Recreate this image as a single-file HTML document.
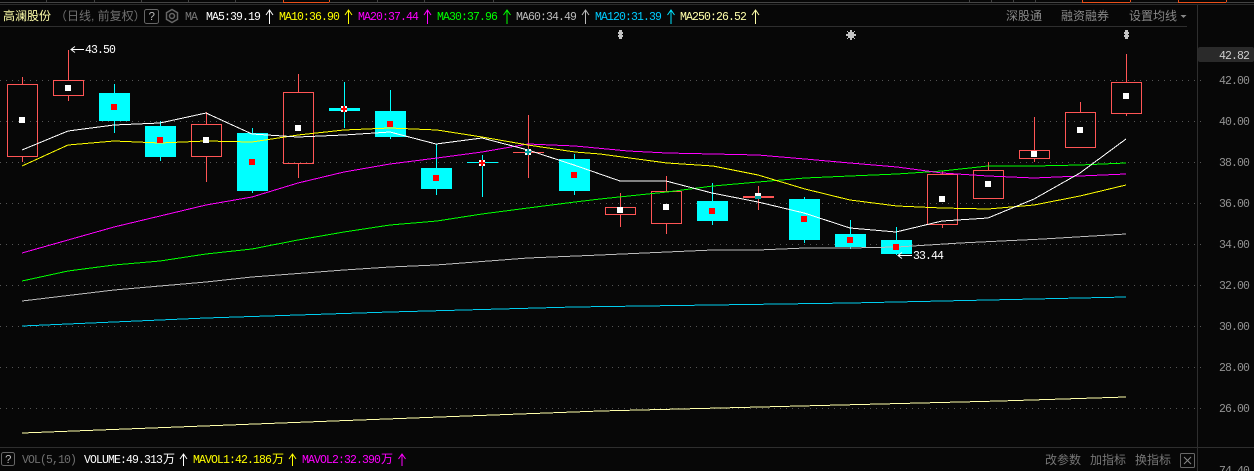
<!DOCTYPE html>
<html><head><meta charset="utf-8"><style>
html,body{margin:0;padding:0;background:#070707;width:1254px;height:471px;overflow:hidden}
svg{display:block}
text{font-family:"Liberation Mono","Noto Sans CJK SC",monospace;font-size:11.500px;letter-spacing:-0.900px}
.c{font-family:"Liberation Sans","Noto Sans CJK SC",sans-serif;font-size:12px;letter-spacing:0}
.g{stroke:#555;stroke-width:1;stroke-dasharray:1 5}
.ln{fill:none;stroke-width:1;shape-rendering:crispEdges}
.w{stroke:#ff5555;stroke-width:1;shape-rendering:crispEdges}
.u{fill:none;stroke:#ff5555;shape-rendering:crispEdges}
.d{fill:#00ffff;shape-rendering:crispEdges}
.dw{stroke:#00ffff;stroke-width:1;shape-rendering:crispEdges}
.a{fill:none;stroke-width:1}
</style></head><body>
<svg width="1254" height="471" viewBox="0 0 1254 471" xmlns="http://www.w3.org/2000/svg">
<rect width="1254" height="471" fill="#070707"/>
<!-- top strip -->
<g shape-rendering="crispEdges">
<rect x="0" y="2" width="1254" height="1" fill="#444"/>
<path d="M46.5 0V2M94.5 0V2M141.5 0V2M188.5 0V2M235.5 0V2M377.5 0V2M424.5 0V2M493.5 0V2M969.5 0V2M991.5 0V2M1013.5 0V2M1035.5 0V2" stroke="#444"/>
<rect x="283" y="2" width="46" height="1" fill="#e8501a"/><path d="M283.5 0V2M329.5 0V2" stroke="#e8501a"/>
<rect x="1082" y="2" width="48" height="1" fill="#e8501a"/><path d="M1082.5 0V2M1130.5 0V2" stroke="#e8501a"/>
<rect x="1178" y="2" width="48" height="1" fill="#e8501a"/><path d="M1178.5 0V2M1226.5 0V2" stroke="#e8501a"/>
<rect x="0" y="4" width="1254" height="1" fill="#2a2a2a"/>
<rect x="0" y="26" width="1187" height="1" fill="#2e2e2e"/>
<rect x="0" y="447" width="1254" height="1" fill="#2e2e2e"/>
<rect x="1197" y="5" width="1" height="466" fill="#2e2e2e"/>
</g>
<!-- grid -->
<g>
<path class="g" d="M0 80.5H1201M0 121.5H1201M0 162.5H1201M0 203.5H1201M0 244.5H1201M0 285.5H1201M0 326.5H1201M0 367.5H1201M0 408.5H1201"/>
</g>
<!-- header -->
<text class="c" x="3" y="20" fill="#ffffaa">高澜股份</text>
<text class="c" x="55" y="20" fill="#707070">（日线, 前复权）</text>
<rect x="144.500" y="9.500" width="14" height="14" rx="2" fill="none" stroke="#666"/>
<text x="148.500" y="20" fill="#bbb">?</text>
<g fill="none" stroke="#666" stroke-width="1.500">
<path d="M172 9.500l5.500 3.200v6.600l-5.500 3.200l-5.500-3.200v-6.600z"/><circle cx="172" cy="16" r="2.500"/>
</g>
<text x="185" y="20" fill="#777">MA</text>
<text x="206" y="20" fill="#fff">MA5:39.19</text>
<text x="279" y="20" fill="#ffff00">MA10:36.90</text>
<text x="358" y="20" fill="#ff00ff">MA20:37.44</text>
<text x="437" y="20" fill="#00ff00">MA30:37.96</text>
<text x="516" y="20" fill="#bbbbbb">MA60:34.49</text>
<text x="595" y="20" fill="#00ccff">MA120:31.39</text>
<text x="680" y="20" fill="#ffffaa">MA250:26.52</text>
<g class="a">
<path stroke="#fff" fill="none" d="M269.500 24V10M266 15L269.500 10L273 15"/>
<path stroke="#ffff00" fill="none" d="M348.500 24V10M345 15L348.500 10L352 15"/>
<path stroke="#ff00ff" fill="none" d="M427.500 24V10M424 15L427.500 10L431 15"/>
<path stroke="#00ff00" fill="none" d="M507 24V10M503.500 15L507 10L510.500 15"/>
<path stroke="#bbb" fill="none" d="M585.500 24V10M582 15L585.500 10L589 15"/>
<path stroke="#00e5ff" fill="none" d="M671 24V10M667.500 15L671 10L674.500 15"/>
<path stroke="#ffffaa" fill="none" d="M755.500 24V10M752 15L755.500 10L759 15"/>
</g>
<text class="c" x="1006" y="20" fill="#888">深股通</text>
<text class="c" x="1061" y="20" fill="#888">融资融券</text>
<text class="c" x="1129" y="20" fill="#888">设置均线</text>
<path d="M1180.500 15h6l-3 3z" fill="#888"/>
<!-- event markers -->
<g fill="#c4c4c4" shape-rendering="crispEdges">
<path d="M619 30h3v2h1v2h-1v1h1v2h-1v2h-3v-2h-1v-2h1v-1h-1v-2h1z"/>
<path d="M1125 30h3v2h1v2h-1v1h1v2h-1v2h-3v-2h-1v-2h1v-1h-1v-2h1z"/>
<rect x="848" y="32" width="6" height="6"/>
<rect x="850" y="30" width="2" height="10"/>
<rect x="846" y="34" width="10" height="2"/>
<rect x="847" y="31" width="1" height="1"/><rect x="854" y="31" width="1" height="1"/><rect x="847" y="38" width="1" height="1"/><rect x="854" y="38" width="1" height="1"/>
</g>
<!-- candle wicks / bodies -->
<g>
<path class="w" d="M22.500 77V84M22.500 157V162M68.500 50V80M68.500 96V101M206.500 112V124M206.500 157V182M298.500 74V92M298.500 164V178M528.500 115V178M620.500 193V207M620.500 215V227M666.500 176V191M666.500 224V234M758.500 186V210M942.500 171V174M942.500 225V228M988.500 162V170M1034.500 117V150M1034.500 159V162M1080.500 102V112M1126.500 54V82M1126.500 114V116"/>
<path class="u" d="M7.500 84.500H37.500V156.500H7.500ZM53.500 80.500H83.500V95.500H53.500ZM191.500 124.500H221.500V156.500H191.500ZM283.500 92.500H313.500V163.500H283.500ZM605.500 207.500H635.500V214.500H605.500ZM651.500 191.500H681.500V223.500H651.500ZM927.500 174.500H957.500V224.500H927.500ZM973.500 170.500H1003.500V198.500H973.500ZM1019.500 150.500H1049.500V158.500H1019.500ZM1065.500 112.500H1095.500V147.500H1065.500ZM1111.500 82.500H1141.500V113.500H1111.500Z"/>
<path class="w" d="M513 152.500H544"/>
<rect x="743" y="196" width="31" height="2" fill="#ff5555" shape-rendering="crispEdges"/>
<path class="dw" d="M114.500 84V133M160.500 121V161M252.500 128V193M344.500 82V128M390.500 90V139M436.500 144V195M482.500 155V197M574.500 154V195M712.500 183V225M804.500 197V243M850.500 220V249M896.500 227V255M467 162.500H498"/>
<g class="d">
<rect x="99" y="93" width="31" height="28"/>
<rect x="145" y="126" width="31" height="31"/>
<rect x="237" y="133" width="31" height="58"/>
<rect x="329" y="108" width="31" height="3"/>
<rect x="375" y="111" width="31" height="26"/>
<rect x="421" y="168" width="31" height="21"/>
<rect x="559" y="159" width="31" height="32"/>
<rect x="697" y="201" width="31" height="20"/>
<rect x="789" y="199" width="31" height="41"/>
<rect x="835" y="234" width="31" height="13"/>
<rect x="881" y="240" width="31" height="14"/>
</g>
</g>
<!-- MAs -->
<polyline class="ln" stroke="#ffffaa" points="22,433 333,421 600,411 800,406 1000,401 1126,397"/>
<polyline class="ln" stroke="#00ccee" points="22,326 114,322 206,318 390,312 574,307 850,303 1034,299 1126,297"/>
<polyline class="ln" stroke="#bbbbbb" points="22,301 114,290 206,282 252,277 344,270 390,267 436,265 528,258 600,255 667,252 713,250 758,250 805,248 850,248 897,247 960,243 1043,239 1126,234"/>
<polyline class="ln" stroke="#00ff00" points="22,281 68,271 114,265 160,261 206,254 252,249 298,240 344,232 390,225 437,221 482,214 528,208 575,202 600,199 667,192 713,186 758,182 805,178 850,176 897,174 942,171 988,166 1034,166 1080,165 1126,163"/>
<polyline class="ln" stroke="#ff00ff" points="22,253 114,227 206,205 252,197 298,183 344,172 390,164 437,158 482,152 528,144 575,146 628,151 667,153 713,154 758,155 805,159 850,163 897,167 942,173 988,176 1034,178 1080,176 1126,174"/>
<polyline class="ln" stroke="#ffff00" points="22,166 68,145 114,141 160,143 206,141 252,142 298,135 344,130 390,128 437,130 482,137 528,145 575,152 600,154 667,163 713,166 758,175 805,189 850,200 897,206 942,208 988,209 1034,205 1080,196 1126,185"/>
<polyline class="ln" stroke="#ffffff" points="22,150 68,131 114,125 160,123 206,113 252,134 298,137 344,135 390,132 436,144 482,138 528,150 574,165 620,181 666,181 712,193 758,202 804,213 850,228 896,232 942,221 988,218 1034,199 1080,173 1126,139"/>
<!-- centre marks -->
<g shape-rendering="crispEdges">
<g fill="#fff">
<rect x="19" y="117" width="6" height="6"/><rect x="65" y="85" width="6" height="6"/><rect x="203" y="137" width="6" height="6"/><rect x="295" y="125" width="6" height="6"/><rect x="617" y="207" width="6" height="6"/><rect x="663" y="204" width="6" height="6"/><rect x="939" y="196" width="6" height="6"/><rect x="985" y="181" width="6" height="6"/><rect x="1031" y="151" width="6" height="6"/><rect x="1077" y="127" width="6" height="6"/><rect x="1123" y="93" width="6" height="6"/>
<rect x="341" y="106" width="6" height="6"/><rect x="479" y="160" width="6" height="6"/><rect x="525" y="149" width="6" height="6"/><rect x="755" y="193" width="6" height="6"/>
</g>
<g fill="#ff0000">
<rect x="111" y="104" width="6" height="6"/><rect x="157" y="137" width="6" height="6"/><rect x="249" y="159" width="6" height="6"/><rect x="387" y="121" width="6" height="6"/><rect x="433" y="175" width="6" height="6"/><rect x="571" y="172" width="6" height="6"/><rect x="709" y="208" width="6" height="6"/><rect x="801" y="216" width="6" height="6"/><rect x="847" y="237" width="6" height="6"/><rect x="893" y="244" width="6" height="6"/>
<rect x="341" y="108" width="6" height="2"/><rect x="343" y="106" width="2" height="6"/>
<rect x="479" y="162" width="6" height="2"/><rect x="481" y="160" width="2" height="6"/>
</g>
<g fill="#00a0a0">
<rect x="525" y="151" width="6" height="2"/><rect x="527" y="149" width="2" height="6"/>
<rect x="755" y="196" width="6" height="3"/>
</g>
</g>
<!-- hi/lo labels -->
<path d="M84 49.500H71M75 46.500L71 49.500L75 52.500" fill="none" stroke="#fff"/>
<text x="85" y="53" fill="#fff">43.50</text>
<path d="M912 255.500H898M902 252.500L898 255.500L902 258.500" fill="none" stroke="#fff"/>
<text x="913" y="259" fill="#fff">33.44</text>
<!-- axis -->
<rect x="1198" y="47" width="56" height="15" rx="2" fill="#2a2a2a"/>
<text x="1219" y="59" fill="#ccc">42.82</text>
<g>
<text x="1219" y="84" fill="#929292">42.00</text>
<text x="1219" y="125" fill="#929292">40.00</text>
<text x="1219" y="166" fill="#929292">38.00</text>
<text x="1219" y="207" fill="#929292">36.00</text>
<text x="1219" y="248" fill="#929292">34.00</text>
<text x="1219" y="289" fill="#929292">32.00</text>
<text x="1219" y="330" fill="#929292">30.00</text>
<text x="1219" y="371" fill="#929292">28.00</text>
<text x="1219" y="412" fill="#929292">26.00</text>
<text x="1219" y="474" fill="#929292">74.40</text>
</g>
<!-- footer -->
<rect x="1.500" y="452.500" width="13" height="13" rx="2" fill="none" stroke="#666"/>
<text x="5" y="463" fill="#bbb">?</text>
<text x="22" y="463" fill="#707070">VOL(5,10)</text>
<text x="84" y="463" fill="#fff">VOLUME:49.313<tspan class="c" dx="1">万</tspan></text>
<text x="193" y="463" fill="#ffff00">MAVOL1:42.186<tspan class="c" dx="1">万</tspan></text>
<text x="302" y="463" fill="#ff00ff">MAVOL2:32.390<tspan class="c" dx="1">万</tspan></text>
<path stroke="#fff" fill="none" d="M183.500 466V454M180 459L183.500 454L187 459"/>
<path stroke="#ffff00" fill="none" d="M292.500 466V454M289 459L292.500 454L296 459"/>
<path stroke="#ff00ff" fill="none" d="M402 466V454M398.500 459L402 454L405.500 459"/>
<text class="c" x="1045" y="464" fill="#777">改参数</text>
<text class="c" x="1090" y="464" fill="#777">加指标</text>
<text class="c" x="1135" y="464" fill="#777">换指标</text>
<rect x="1180.500" y="453.500" width="14" height="14" rx="1" fill="none" stroke="#666"/>
<path d="M1184 457L1191 464M1191 457L1184 464" stroke="#888" fill="none"/>
</svg>
</body></html>
